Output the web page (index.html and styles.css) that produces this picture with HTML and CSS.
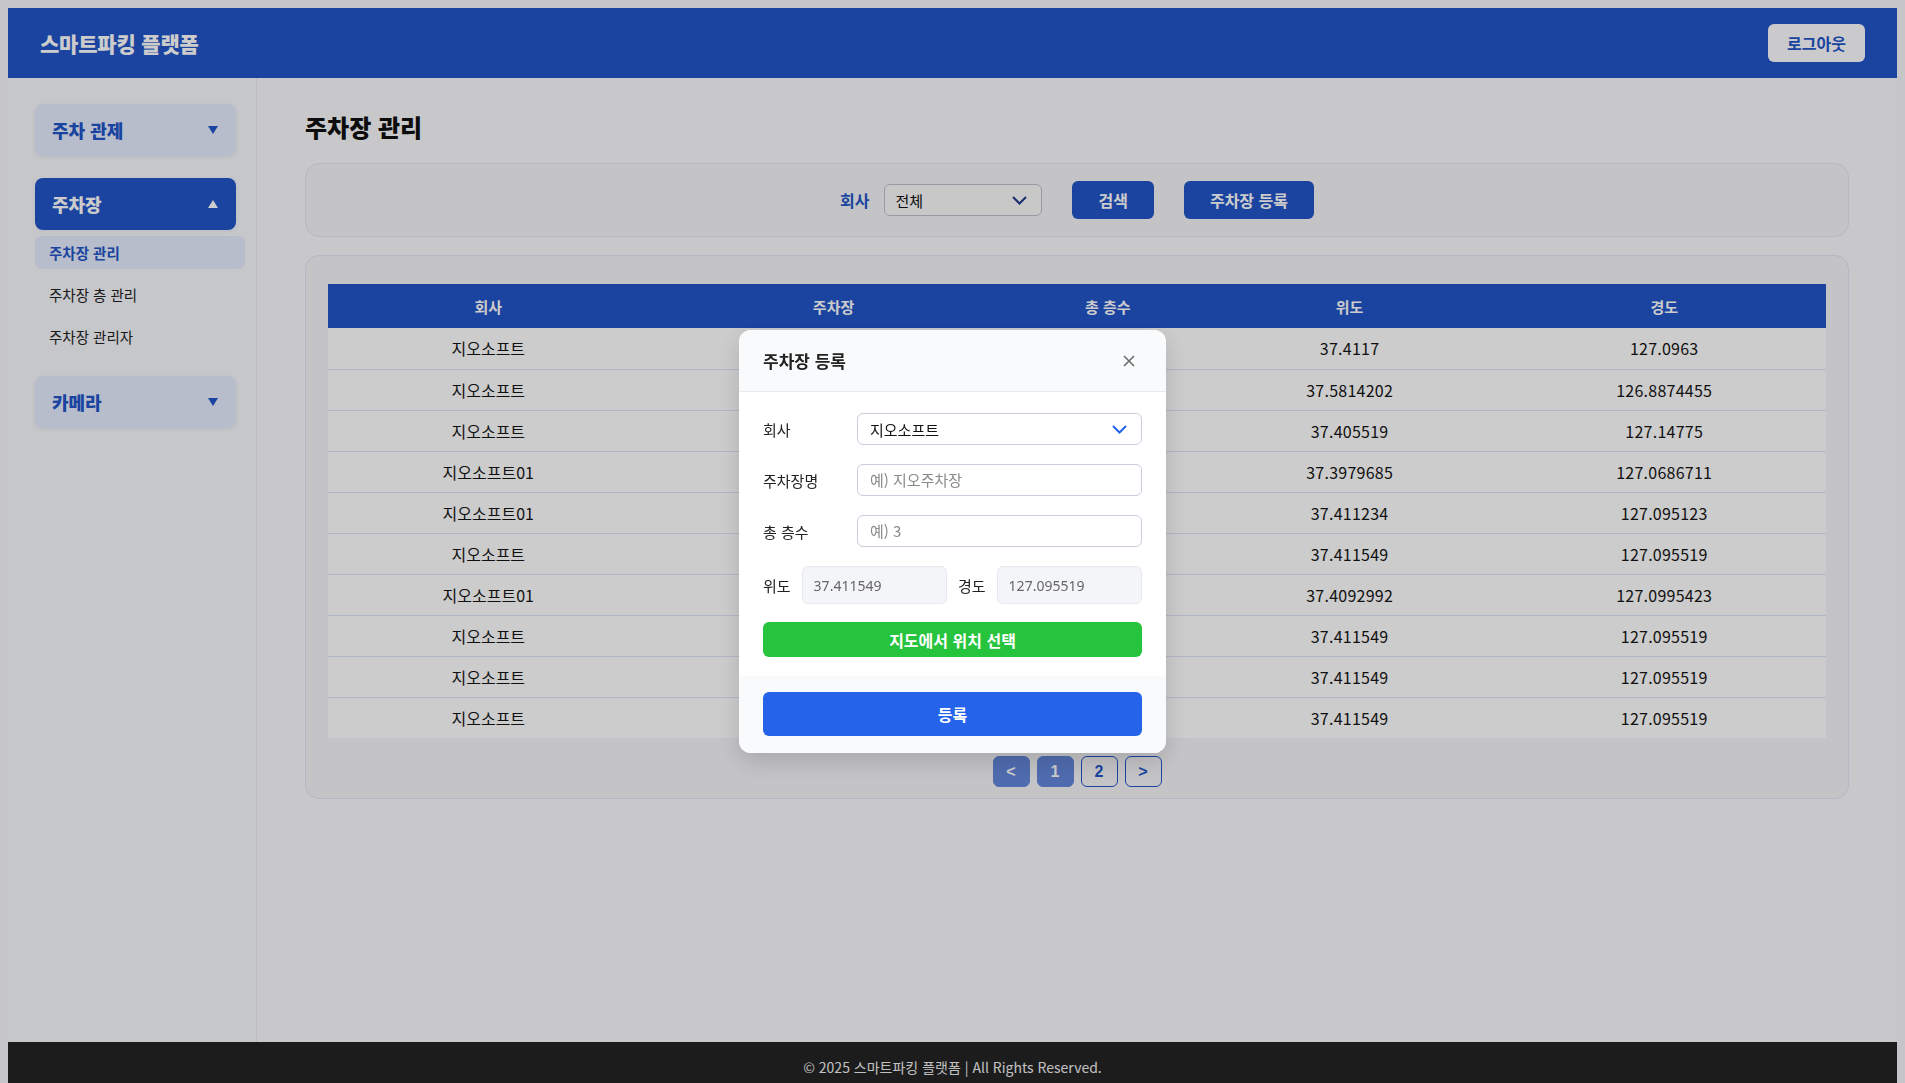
FILE: index.html
```html
<!DOCTYPE html>
<html lang="ko">
<head>
<meta charset="utf-8">
<title>스마트파킹 플랫폼</title>
<link rel="stylesheet" href="styles.css">
</head>
<body class="modal-open">
<div class="app">
  <header class="topbar">
    <div class="brand">스마트파킹 플랫폼</div>
    <button class="logout">로그아웃</button>
  </header>
  <div class="layout">
    <aside class="sidebar">
      <div class="menu-group">
        <div class="menu-btn">
          <span>주차 관제</span>
          <svg class="tri" width="10" height="8" viewBox="0 0 10 8"><path d="M0 0H10L5 8Z"/></svg>
        </div>
      </div>
      <div class="menu-group">
        <div class="menu-btn active">
          <span>주차장</span>
          <svg class="tri" width="10" height="8" viewBox="0 0 10 8"><path d="M0 8H10L5 0Z"/></svg>
        </div>
        <ul class="submenu">
          <li class="sub-item current">주차장 관리</li>
          <li class="sub-item">주차장 층 관리</li>
          <li class="sub-item">주차장 관리자</li>
        </ul>
      </div>
      <div class="menu-group">
        <div class="menu-btn">
          <span>카메라</span>
          <svg class="tri" width="10" height="8" viewBox="0 0 10 8"><path d="M0 0H10L5 8Z"/></svg>
        </div>
      </div>
    </aside>
    <main class="main">
      <h1 class="page-title">주차장 관리</h1>
      <section class="filter-card">
        <label class="filter-label">회사</label>
        <div class="filter-select">
          <span>전체</span>
          <svg width="15" height="9" viewBox="0 0 15 9"><polyline points="1,1 7.5,7.5 14,1" fill="none" stroke="#1e3a8a" stroke-width="2"/></svg>
        </div>
        <button class="btn-primary btn-search">검색</button>
        <button class="btn-primary">주차장 등록</button>
      </section>
      <section class="table-card">
        <table class="data-table">
          <thead>
            <tr><th class="c1">회사</th><th class="c2">주차장</th><th class="c3">총 층수</th><th class="c4">위도</th><th class="c5">경도</th></tr>
          </thead>
          <tbody>
            <tr><td>지오소프트</td><td></td><td></td><td class="num">37.4117</td><td class="num">127.0963</td></tr>
            <tr><td>지오소프트</td><td></td><td></td><td class="num">37.5814202</td><td class="num">126.8874455</td></tr>
            <tr><td>지오소프트</td><td></td><td></td><td class="num">37.405519</td><td class="num">127.14775</td></tr>
            <tr><td>지오소프트01</td><td></td><td></td><td class="num">37.3979685</td><td class="num">127.0686711</td></tr>
            <tr><td>지오소프트01</td><td></td><td></td><td class="num">37.411234</td><td class="num">127.095123</td></tr>
            <tr><td>지오소프트</td><td></td><td></td><td class="num">37.411549</td><td class="num">127.095519</td></tr>
            <tr><td>지오소프트01</td><td></td><td></td><td class="num">37.4092992</td><td class="num">127.0995423</td></tr>
            <tr><td>지오소프트</td><td></td><td></td><td class="num">37.411549</td><td class="num">127.095519</td></tr>
            <tr><td>지오소프트</td><td></td><td></td><td class="num">37.411549</td><td class="num">127.095519</td></tr>
            <tr><td>지오소프트</td><td></td><td></td><td class="num">37.411549</td><td class="num">127.095519</td></tr>
          </tbody>
        </table>
        <nav class="pager">
          <button class="page-btn filled">&lt;</button>
          <button class="page-btn filled">1</button>
          <button class="page-btn">2</button>
          <button class="page-btn">&gt;</button>
        </nav>
      </section>
    </main>
  </div>
  <footer class="footer">© 2025 스마트파킹 플랫폼 | All Rights Reserved.</footer>
</div>

<div class="backdrop">
  <div class="modal">
    <div class="modal-head">
      <h2 class="modal-title">주차장 등록</h2>
      <svg class="close" width="12" height="12" viewBox="0 0 12 12"><path d="M1 1L11 11M11 1L1 11" stroke="#6b6b6b" stroke-width="1.6" fill="none"/></svg>
    </div>
    <div class="modal-body">
      <div class="form-row">
        <label class="form-label">회사</label>
        <div class="form-select">
          <span>지오소프트</span>
          <svg width="15" height="9" viewBox="0 0 15 9"><polyline points="1,1 7.5,7.5 14,1" fill="none" stroke="#2563eb" stroke-width="2"/></svg>
        </div>
      </div>
      <div class="form-row">
        <label class="form-label">주차장명</label>
        <input class="form-input" type="text" placeholder="예) 지오주차장">
      </div>
      <div class="form-row">
        <label class="form-label">총 층수</label>
        <input class="form-input" type="text" placeholder="예) 3">
      </div>
      <div class="form-row coords">
        <label class="coord-label">위도</label>
        <input class="coord-input" type="text" value="37.411549" readonly>
        <label class="coord-label">경도</label>
        <input class="coord-input" type="text" value="127.095519" readonly>
      </div>
      <button class="btn-map">지도에서 위치 선택</button>
    </div>
    <div class="modal-foot">
      <button class="btn-submit">등록</button>
    </div>
  </div>
</div>
</body>
</html>
```
FILE: styles.css
```css
* { box-sizing: border-box; }

html, body {
  font-family: "Noto Sans CJK KR", "Noto Sans", sans-serif;
  color: #1a1a1a;
}

body {
  margin: 8px;
  background: #f8f8fa;
}

body.modal-open { overflow: hidden; }

button { font-family: inherit; cursor: pointer; }

.app {
  min-height: 100vh;
  display: flex;
  flex-direction: column;
  background: #fbfbfe;
}

/* top bar */
.topbar {
  height: 70px;
  background: #2255c8;
  display: flex;
  align-items: center;
  justify-content: space-between;
  padding: 0 32px;
}
.brand {
  color: #fff;
  font-size: 21px;
  font-weight: 800;
  letter-spacing: -0.2px;
}
.logout {
  height: 38px;
  padding: 0 19px;
  border: none;
  border-radius: 6px;
  background: #fdfdff;
  color: #2255c8;
  font-size: 16px;
  font-weight: 700;
}

/* layout */
.layout {
  flex: 1;
  display: flex;
}

.sidebar {
  width: 249px;
  flex-shrink: 0;
  background: #f8f9fd;
  border-right: 1px solid #e6ebf5;
  padding: 26px 11px 0 27px;
}
.menu-group { margin-bottom: 22px; }
.menu-btn {
  width: 201px;
  height: 52px;
  border-radius: 8px;
  background: #e6edff;
  color: #2255c8;
  font-size: 18px;
  font-weight: 800;
  display: flex;
  align-items: center;
  justify-content: space-between;
  padding: 0 18px 0 17px;
  box-shadow: 0 1px 4px rgba(30, 60, 140, 0.08);
}
.menu-btn .tri { fill: #2255c8; }
.menu-btn.active {
  background: #2255c8;
  color: #fff;
}
.menu-btn.active .tri { fill: #fff; }

.submenu {
  list-style: none;
  margin: 6px 0 0;
  padding: 0 0 1px;
  display: flex;
  flex-direction: column;
  gap: 9px;
}
.sub-item {
  height: 33px;
  display: flex;
  align-items: center;
  padding-left: 14px;
  font-size: 14.5px;
  color: #222;
  border-radius: 6px;
}
.sub-item.current {
  background: #e6edff;
  color: #2255c8;
  font-weight: 700;
}

/* main */
.main {
  flex: 1;
  padding: 32px 48px;
}
.page-title {
  margin: 0 0 20px;
  font-size: 24px;
  line-height: 33px;
  font-weight: 800;
  color: #111;
}

.filter-card {
  display: flex;
  align-items: center;
  justify-content: center;
  padding: 17px 24px;
  border: 1px solid #e3e8f3;
  border-radius: 14px;
  background: #f5f5f8;
}
.filter-label {
  font-size: 16px;
  font-weight: 700;
  color: #2255c8;
  margin-right: 15px;
}
.filter-select {
  width: 158px;
  height: 32px;
  border: 1px solid #bcc2ce;
  border-radius: 6px;
  background: #fafafa;
  display: flex;
  align-items: center;
  justify-content: space-between;
  padding: 0 14px 0 10px;
  font-size: 15px;
  color: #111;
  margin-right: 30px;
}
.btn-primary {
  height: 38px;
  padding: 0 26px;
  border: none;
  border-radius: 6px;
  background: #2255c8;
  color: #fff;
  font-size: 16px;
  font-weight: 700;
}
.btn-search { margin-right: 30px; }

.table-card {
  margin-top: 18px;
  border: 1px solid #dfe6f5;
  border-radius: 14px;
  background: #f5f5f8;
  padding: 28px 22px 11px;
}
.data-table {
  width: 100%;
  border-collapse: collapse;
  table-layout: fixed;
}
.data-table th {
  height: 44px;
  background: #2255c8;
  color: #fff;
  font-size: 15px;
  font-weight: 700;
  text-align: center;
}
.data-table .c1 { width: 21.4%; }
.data-table .c2 { width: 24.7%; }
.data-table .c3 { width: 11.9%; }
.data-table .c4 { width: 20.4%; }
.data-table .c5 { width: 21.6%; }
.data-table td {
  height: 41px;
  background: #fff;
  text-align: center;
  font-size: 16px;
  color: #151515;
  border-bottom: 1px solid #dde5f7;
}
.data-table td.num { letter-spacing: 0.25px; }
.data-table tbody tr:last-child td { border-bottom: none; }

.pager {
  margin-top: 18px;
  display: flex;
  justify-content: center;
  gap: 7px;
}
.page-btn {
  width: 37px;
  height: 31px;
  border: 1px solid #2255c8;
  border-radius: 6px;
  background: transparent;
  color: #2255c8;
  font-family: "Liberation Sans", Arial, sans-serif;
  font-size: 16px;
  font-weight: 700;
  padding: 0;
}
.page-btn.filled {
  background: #6487dc;
  border-color: #6487dc;
  color: #fff;
}

.footer {
  height: 49px;
  background: #232323;
  color: #f2f2f2;
  font-size: 14px;
  display: flex;
  align-items: center;
  justify-content: center;
}

/* modal */
.backdrop {
  position: fixed;
  inset: 0;
  background: rgba(0, 0, 0, 0.2);
  display: flex;
  align-items: center;
  justify-content: center;
}
.modal {
  width: 427px;
  background: #fff;
  border-radius: 12px;
  overflow: hidden;
  box-shadow: 0 8px 24px rgba(0, 0, 0, 0.15);
}
.modal-head {
  height: 62px;
  background: #f9fafb;
  border-bottom: 1px solid #e8eaee;
  display: flex;
  align-items: center;
  justify-content: space-between;
  padding: 0 31px 0 24px;
}
.modal-title {
  margin: 0;
  font-size: 17px;
  font-weight: 700;
  color: #222;
}
.modal-body {
  padding: 21px 24px 19px;
}
.form-row {
  display: flex;
  align-items: center;
  margin-bottom: 19px;
}
.form-label {
  width: 94px;
  flex-shrink: 0;
  font-size: 15px;
  color: #222;
}
.form-select, .form-input {
  flex: 1;
  height: 32px;
  border: 1px solid #c9cedb;
  border-radius: 6px;
  background: #fff;
  font-size: 15px;
  padding: 0 12px;
}
.form-select {
  display: flex;
  align-items: center;
  justify-content: space-between;
  padding-right: 14px;
  color: #111;
}
.form-input {
  font-family: "Noto Sans", "Noto Sans CJK KR", sans-serif;
  color: #222;
}
.form-input::placeholder {
  color: #8a8a8a;
  font-family: "Noto Sans CJK KR", sans-serif;
}
.coords {
  gap: 11px;
  margin-bottom: 18px;
}
.coord-label {
  font-size: 15px;
  color: #222;
  flex-shrink: 0;
}
.coord-input {
  flex: 1;
  min-width: 0;
  height: 38px;
  border: 1px solid #e7e9ee;
  border-radius: 6px;
  background: #f4f5f8;
  padding: 0 11px;
  font-family: "Noto Sans", sans-serif;
  font-size: 14px;
  color: #666;
}
.btn-map {
  width: 100%;
  height: 35px;
  border: none;
  border-radius: 6px;
  background: #26c43c;
  color: #fff;
  font-size: 16px;
  font-weight: 700;
}
.modal-foot {
  background: #f9fafb;
  padding: 16px 24px 17px;
}
.btn-submit {
  width: 100%;
  height: 44px;
  border: none;
  border-radius: 6px;
  background: #2563eb;
  color: #fff;
  font-size: 16px;
  font-weight: 700;
}
```
